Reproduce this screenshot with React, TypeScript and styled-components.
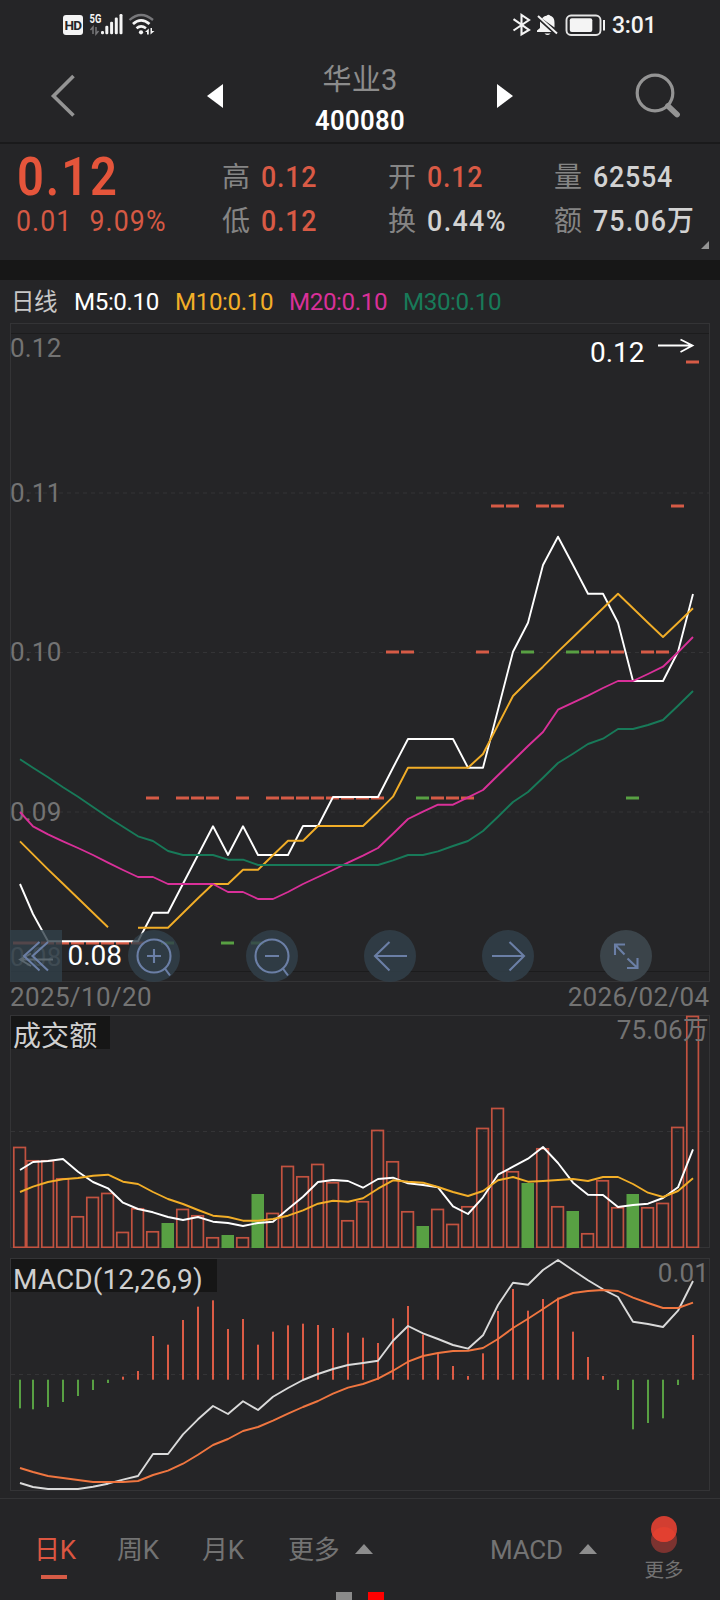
import React from "react";
import styled, { createGlobalStyle } from "styled-components";

const C = {
  bg: "#252527",
  band: "#171717",
  candle: "#d65b46",
  green: "#58a043",
  white: "#ffffff",
  yellow: "#f2ae28",
  pink: "#d93099",
  teal: "#187a59",
  orange: "#f07640",
  grey: "#737373",
  frame: "#343436",
  icon: "#6b7fa6",
};

const GlobalStyle = createGlobalStyle`
  * { box-sizing: border-box; }
  body { margin: 0; background: ${C.bg}; }
`;

const Screen = styled.main`
  width: 720px;
  height: 1600px;
  overflow: hidden;
  display: flex;
  flex-direction: column;
  background: ${C.bg};
  color: #dcdcdc;
  font-family: Roboto, "Noto Sans CJK SC", sans-serif;
`;

const StatusBar = styled.div`
  height: 50px;
  display: flex;
  justify-content: space-between;
  padding: 0 65px 0 63px;
`;

const StatusGroup = styled.div`
  display: flex;
  align-items: center;
  height: 50px;
`;

const HdBadge = styled.span`
  width: 20px;
  height: 20px;
  border-radius: 3px;
  background: #f4f4f4;
  color: ${C.bg};
  font: 700 13.5px/20px Roboto, sans-serif;
  letter-spacing: -0.6px;
  text-align: center;
`;

const Clock = styled.span`
  margin-left: 7px;
  width: 43px;
  font-size: 23px;
  line-height: 51px;
  font-weight: 500;
  letter-spacing: -0.2px;
  color: #f4f4f4;
  white-space: nowrap;
`;

const Header = styled.header`
  height: 94px;
  border-bottom: 2px solid #1a1a1b;
  display: grid;
  grid-template-columns: 207px 306px 207px;
  align-items: start;
`;

const HeaderSide = styled.div<{ $right?: boolean }>`
  height: 92px;
  display: flex;
  justify-content: ${(p) => (p.$right ? "flex-end" : "flex-start")};
  padding: ${(p) => (p.$right ? "23px 39px 0 0" : "24px 0 0 50px")};
`;

const Switcher = styled.div`
  height: 92px;
  display: flex;
  justify-content: space-between;
`;

const Arrow = styled.svg`
  width: 16px;
  height: 24px;
  margin-top: 34px;
`;

const Title = styled.div`
  display: flex;
  flex-direction: column;
  align-items: center;
  padding-top: 9px;
`;

const StockName = styled.div`
  font-size: 29px;
  line-height: 42px;
  letter-spacing: 0.3px;
  color: #8c8c8c;
`;

const StockCode = styled.div`
  font-size: 28.5px;
  line-height: 40px;
  font-weight: 600;
  color: #fff;
  letter-spacing: 0.4px;
  transform: scaleX(0.9);
`;

const Quote = styled.section`
  height: 116px;
  display: grid;
  grid-template-columns: 222px 166px 166px 1fr;
  position: relative;
`;

const LastPrice = styled.div`
  padding-left: 17px;
`;

const Price = styled.div`
  font-size: 54.5px;
  line-height: 46px;
  height: 55px;
  padding-top: 9px;
  font-weight: 600;
  color: #e5553b;
  letter-spacing: 2.2px;
  transform: scaleX(0.865);
  transform-origin: left;
`;

const Change = styled.div`
  display: flex;
  gap: 18.5px;
  margin-left: -1px;
  font-size: 29px;
  line-height: 44px;
  font-weight: 430;
  letter-spacing: 1.2px;
  color: #d65944;
  transform: scaleX(0.92);
  transform-origin: left;
`;

const StatColumn = styled.div`
  padding-top: 11px;
`;

const Stat = styled.div`
  display: flex;
  height: 44px;
  line-height: 44px;
  white-space: nowrap;
`;

const StatLabel = styled.span`
  width: 38.5px;
  padding-top: 1px;
  font-size: 28px;
  color: #858585;
`;

const StatValue = styled.span<{ $up?: boolean; $spacing?: number }>`
  font-size: 29px;
  font-weight: 500;
  letter-spacing: ${(p) => p.$spacing ?? 0.8}px;
  color: ${(p) => (p.$up ? "#d95a45" : "#d2d2d2")};
  transform: scaleX(0.925);
  transform-origin: left;
`;

const Corner = styled.svg`
  position: absolute;
  right: 11px;
  bottom: 11px;
`;

const Band = styled.div`
  height: 20px;
  background: ${C.band};
`;

const Legend = styled.div`
  height: 43px;
  padding-left: 11px;
  display: flex;
  line-height: 44px;
  font-size: 24.2px;
  letter-spacing: -0.4px;
  white-space: nowrap;
`;

const LegendItem = styled.span<{ $color: string; $width: number; $small?: boolean }>`
  width: ${(p) => p.$width}px;
  color: ${(p) => p.$color};
  font-size: ${(p) => (p.$small ? "23.5px" : "inherit")};
`;

const Panel = styled.section<{ $height: number }>`
  height: ${(p) => p.$height}px;
  position: relative;
  flex: none;
`;

const Plot = styled.svg`
  display: block;
`;

const Dates = styled.div`
  height: 33px;
  padding: 0 10.5px 0 10px;
  display: flex;
  justify-content: space-between;
  font-size: 26px;
  line-height: 30px;
  letter-spacing: 0.35px;
  color: ${C.grey};
`;

const PanelName = styled.div<{ $width: number }>`
  position: absolute;
  left: 11px;
  top: 1px;
  width: ${(p) => p.$width}px;
  height: 33px;
  padding-left: 2px;
  background: #161616;
  color: #cfcfcf;
  font-size: 28px;
  line-height: 41px;
  letter-spacing: 0.1px;
  white-space: nowrap;
`;

const PanelMax = styled.div`
  position: absolute;
  right: 11px;
  top: 0;
  font-size: 26px;
  line-height: 31px;
  letter-spacing: 0.15px;
  color: ${C.grey};
`;

const Controls = styled.div`
  position: absolute;
  left: 10px;
  bottom: 0;
  display: flex;
  gap: 66px;
`;

const Control = styled.button<{ $square?: boolean; $bright?: boolean }>`
  width: 52px;
  height: 52px;
  padding: 0;
  border: 0;
  border-radius: ${(p) => (p.$square ? "0" : "50%")};
  background: ${(p) => (p.$bright ? "#3b444a" : p.$square ? "rgba(50, 65, 75, 0.8)" : "rgba(50, 65, 75, 0.82)")};
  svg {
    display: block;
  }
`;

const Gap = styled.div<{ $height: number }>`
  height: ${(p) => p.$height}px;
`;

const TabBar = styled.nav`
  height: 102px;
  border-top: 1px solid ${C.frame};
  display: flex;
  position: relative;
  padding-left: 34px;
  font-size: 26px;
  color: ${C.grey};
`;

const Tab = styled.div<{ $active?: boolean; $width: number; $indent?: number }>`
  width: ${(p) => p.$width}px;
  padding: 31px 0 0 ${(p) => p.$indent ?? 0}px;
  line-height: 40px;
  letter-spacing: -0.2px;
  color: ${(p) => (p.$active ? "#dc5641" : C.grey)};
  white-space: nowrap;
  &::after {
    content: "";
    display: ${(p) => (p.$active ? "block" : "none")};
    width: 26px;
    height: 4px;
    margin: 5px 0 0 7px;
    background: #d65b46;
  }
`;

const Caret = styled.svg`
  margin-top: 45px;
  flex: none;
`;

const More = styled.div`
  width: 40px;
  margin-left: 47px;
  padding-top: 17px;
  text-align: center;
  font-size: 19.5px;
  line-height: 28px;
  white-space: nowrap;
  svg {
    display: block;
    margin: 0 auto 4px;
  }
`;

const Pager = styled.div`
  position: absolute;
  left: 336px;
  bottom: 0;
  display: flex;
  gap: 16px;
`;

const Dot = styled.i<{ $on?: boolean }>`
  width: 16px;
  height: 8px;
  background: ${(p) => (p.$on ? "#ff0000" : "#8a8a8a")};
`;

/* Chart series: vertical positions in thirds of a pixel, one entry per trading day. */

const xAt = (i: number) => (i === 0 ? 20 : 33 + 15 * (i - 1));

const line = (ys: number[], base: number, start = 0) =>
  ys.map((y, k) => `${xAt(start + k)},${(base + y / 3).toFixed(1)}`).join(" ");

const CANDLES: { y: number; up: number[]; down: number[] }[] = [
  { y: 39, up: [45], down: [] },
  { y: 183, up: [32, 33, 35, 36, 44], down: [] },
  { y: 329, up: [25, 26, 31, 38, 39, 40, 42, 43], down: [34, 37] },
  { y: 475, up: [9, 11, 12, 13, 15, 17, 18, 19, 20, 21, 22, 23, 24, 28, 29, 30], down: [27, 41] },
  { y: 620, up: [0, 1, 2, 3, 4, 5, 6, 7, 8], down: [10, 14, 16] },
];

const MA5 = [
  1683, 1773, 1855, 1855, 1855, 1855, 1855, 1855, 1855, 1769, 1769, 1682, 1596, 1510, 1596, 1510, 1596, 1596, 1596,
  1509, 1509, 1422, 1422, 1422, 1422, 1334, 1248, 1248, 1248, 1248, 1334, 1334, 1160, 986, 899, 726, 641, 726, 812,
  812, 899, 1074, 1074, 1074, 986, 813,
];
const MA10_A = [1555, 1594, 1639, 1682, 1726, 1769, 1813];
const MA10_B = [
  1814, 1814, 1814, 1770, 1726, 1683, 1683, 1640, 1640, 1597, 1553, 1553, 1509, 1509, 1509, 1509, 1466, 1421, 1334,
  1334, 1334, 1334, 1334, 1293, 1206, 1119, 1074, 1031, 986, 943, 899, 856, 812, 856, 899, 942, 899, 856,
];
const MA20 = [
  1467, 1510, 1534, 1555, 1575, 1596, 1619, 1641, 1662, 1662, 1683, 1683, 1683, 1683, 1707, 1707, 1728, 1728, 1707,
  1683, 1662, 1641, 1619, 1598, 1575, 1532, 1488, 1466, 1445, 1445, 1423, 1401, 1357, 1313, 1269, 1227, 1160, 1139,
  1118, 1095, 1074, 1074, 1053, 1031, 988, 942,
];
const MA30 = [
  1309, 1334, 1363, 1393, 1421, 1452, 1483, 1511, 1540, 1554, 1584, 1596, 1596, 1596, 1610, 1610, 1626, 1626, 1626,
  1626, 1626, 1626, 1626, 1626, 1626, 1612, 1596, 1596, 1585, 1569, 1554, 1524, 1481, 1437, 1407, 1364, 1320, 1292,
  1263, 1247, 1218, 1218, 1206, 1191, 1148, 1104,
];

const VOLUME = [
  440, 480, 480, 534, 648, 590, 578, 695, 624, 693, 669, 626, 645, 711, 705, 711, 582, 638, 497, 528, 491, 546, 660,
  603, 389, 483, 633, 678, 626, 671, 618, 383, 323, 513, 549, 444, 618, 633, 699, 540, 621, 582, 621, 608, 380, 47,
];
const VOLUME_DOWN = [10, 14, 16, 27, 34, 37, 41];
const VOL_MA5 = [
  510, 486, 483, 477, 515, 546, 565, 608, 627, 637, 651, 660, 651, 665, 669, 678, 669, 665, 627, 590, 546, 540, 543,
  563, 537, 533, 550, 555, 562, 619, 642, 592, 524, 500, 476, 441, 489, 548, 584, 585, 621, 615, 611, 594, 562, 448,
];
const VOL_MA10 = [
  576, 560, 546, 538, 534, 527, 524, 545, 552, 576, 597, 612, 630, 647, 651, 662, 662, 657, 647, 631, 611, 602, 605,
  595, 566, 541, 545, 548, 561, 576, 588, 573, 541, 531, 545, 543, 540, 537, 543, 531, 531, 552, 578, 591, 573, 535,
];

const MACD = [
  505, 508, 501, 486, 468, 450, 429, 410, 393, 288, 314, 240, 200, 181, 267, 237, 314, 275, 256, 251, 255, 264, 278,
  293, 309, 235, 198, 284, 340, 378, 408, 340, 213, 147, 212, 177, 173, 275, 351, 408, 450, 568, 549, 535, 435, 285,
];
const DIF = [
  729, 741, 747, 747, 747, 740, 731, 719, 708, 642, 642, 583, 538, 498, 522, 484, 510, 470, 444, 420, 402, 387, 375,
  369, 362, 302, 258, 280, 297, 315, 326, 286, 195, 128, 134, 90, 60, 91, 121, 148, 171, 245, 252, 261, 212, 123,
];
const DEA = [
  684, 696, 708, 714, 720, 726, 726, 726, 723, 705, 692, 671, 644, 615, 597, 573, 561, 542, 521, 501, 483, 461, 443,
  432, 416, 392, 365, 348, 339, 333, 332, 324, 297, 264, 236, 207, 177, 159, 153, 150, 153, 173, 189, 204, 204, 188,
];

const Curve = ({ points, color }: { points: string; color: string }) => (
  <polyline points={points} fill="none" stroke={color} strokeWidth={1.9} strokeLinejoin="round" />
);

const Frame = ({ height }: { height: number }) => (
  <rect x={10.5} y={0.5} width={699} height={height - 1} fill="none" stroke={C.frame} />
);

const Grid = ({ y }: { y: number }) => (
  <line x1={11} x2={709} y1={y} y2={y} stroke={C.frame} strokeDasharray="4 4" />
);

const PriceChart = () => (
  <Plot width={720} height={659} fontSize={26} fill={C.grey} letterSpacing={0.2}>
    <Frame height={659} />
    <path d="M11 10.5H709M11 648.5H709" stroke="#1c1c1d" />
    {[170, 329.5, 489].map((y) => (
      <Grid key={y} y={y} />
    ))}
    <text x={10} y={34}>0.12</text>
    <text x={10} y={179}>0.11</text>
    <text x={10} y={338}>0.10</text>
    <text x={10} y={498}>0.09</text>
    <text x={10} y={643}>0.08</text>
    {CANDLES.map(({ y, up, down }) => (
      <g key={y}>
        {up.map((i) => (
          <rect key={i} x={xAt(i) - 7} y={y - 1.5} width={13} height={3} fill={C.candle} />
        ))}
        {down.map((i) => (
          <rect key={i} x={xAt(i) - 7} y={y - 1.5} width={13} height={3} fill={C.green} />
        ))}
      </g>
    ))}
    <Curve points={line(MA5, 0)} color={C.white} />
    <Curve points={line(MA10_A, 0)} color={C.yellow} />
    <Curve points={line(MA10_B, 0, 8)} color={C.yellow} />
    <Curve points={line(MA20, 0)} color={C.pink} />
    <Curve points={line(MA30, 0)} color={C.teal} />
    <text x={590} y={39} fontSize={28} letterSpacing={0} fill="#fff">0.12</text>
    <text x={67.5} y={642} fontSize={28} letterSpacing={0} fill="#fff">0.08</text>
    <path
      d="M658 22.5H692M680.5 16.5L692.5 22.5L680.5 29M53 636.5H20M31 630.5L20 636.5L31 643"
      fill="none"
      stroke="#fff"
      strokeWidth={1.8}
    />
  </Plot>
);

const VolumeChart = () => (
  <Plot width={720} height={233}>
    <Frame height={233} />
    <Grid y={116.5} />
    {VOLUME.map((v, i) => {
      const top = v / 3 - 15;
      return VOLUME_DOWN.includes(i) ? (
        <rect key={i} x={xAt(i) - 6.5} y={top} width={12.5} height={233 - top} fill={C.green} />
      ) : (
        <rect
          key={i}
          x={xAt(i) - 6.2}
          y={top + 0.8}
          width={11.6}
          height={231.5 - top}
          fill="none"
          stroke="#c25240"
          strokeWidth={1.7}
        />
      );
    })}
    <Curve points={line(VOL_MA5, -15)} color={C.white} />
    <Curve points={line(VOL_MA10, -15)} color={C.yellow} />
  </Plot>
);

const MacdChart = () => (
  <Plot width={720} height={233}>
    <Frame height={233} />
    <Grid y={116.5} />
    {MACD.map((v, i) => {
      const y = v / 3 - 18;
      const zero = 121.7;
      return (
        <rect
          key={i}
          x={xAt(i) - 1}
          y={Math.min(y, zero)}
          width={2}
          height={Math.abs(y - zero)}
          fill={y > zero ? C.green : "#dc5b45"}
        />
      );
    })}
    <Curve points={line(DIF, -18)} color="#dadada" />
    <Curve points={line(DEA, -18)} color={C.orange} />
  </Plot>
);

const ControlIcon = ({ d, children }: { d: string; children?: React.ReactNode }) => (
  <svg width={52} height={52} fill="none" stroke={C.icon} strokeWidth={2.1}>
    <path d={d} />
    {children}
  </svg>
);

const UpCaret = () => (
  <Caret width={18} height={10} fill="#8d8d8d">
    <path d="M0 10L9 0L18 10Z" />
  </Caret>
);

const SignalIcon = () => (
  <svg width={42} height={24} fill="#f4f4f4">
    <text x={6.5} y={9.7} fontSize={12.2} fontWeight={700} textLength={11.8} lengthAdjust="spacingAndGlyphs">
      5G
    </text>
    <path d="M7.5 17L10 14V21M13 14V21L15.5 18" fill="none" stroke="#77777a" strokeWidth={1.5} />
    <rect x={18} y={18} width={3} height={3.3} rx={1.2} />
    <rect x={22.3} y={12.7} width={3} height={8.6} rx={1.2} />
    <rect x={27.1} y={8.7} width={3} height={12.6} rx={1.2} />
    <rect x={31.8} y={4.5} width={3} height={16.8} rx={1.2} />
    <rect x={36.5} y={1} width={3} height={20.3} rx={1.2} />
  </svg>
);

const WifiIcon = () => (
  <svg width={31} height={24} fill="none">
    <path d="M4.5 7Q16 -3 28 7" stroke="#77777a" strokeWidth={2.3} />
    <path d="M8 11Q16 3.8 24.5 11" stroke="#f4f4f4" strokeWidth={2.8} />
    <path d="M11.5 15.2Q16 11.5 21 15.2" stroke="#f4f4f4" strokeWidth={2.6} />
    <circle cx={16} cy={19.3} r={2.1} fill="#f4f4f4" />
    <path d="M20 19L23.8 15.5V21.500H22V19ZM25.500 15V21.500L29.500 18H27V15Z" fill="#f4f4f4" />
  </svg>
);

const BluetoothIcon = () => (
  <svg width={20} height={24} fill="none" stroke="#f4f4f4" strokeWidth={2.1}>
    <path d="M1.5 6.2L17 17L9.5 21.5V2L17 7L1.5 17.5" />
  </svg>
);

const MutedBellIcon = () => (
  <svg width={28} height={24} fill="#f4f4f4">
    <path d="M10 5.5C11 3.8 13 3 14.5 2.7Q16.5 1 18.3 2.7C22 4 22.5 7 22.5 10V14.5Z" />
    <path d="M8 8.5L19.5 19H5V17.5L8 15Z" />
    <path d="M6 3L25 20.5" stroke="#f4f4f4" strokeWidth={2} />
    <path d="M12.5 20.5H18.5Q15.5 23.5 12.5 20.5Z" />
  </svg>
);

const BatteryIcon = () => (
  <svg width={45} height={24} fill="none">
    <rect x={6.5} y={2.5} width={34} height={19.5} rx={4.5} stroke="#e4e4e4" strokeWidth={1.9} />
    <rect x={9.8} y={5.3} width={22.5} height={13.7} rx={2} fill="#f4f4f4" />
    <path d="M44 7V17.5" stroke="#f4f4f4" strokeWidth={2} />
  </svg>
);

export default function App() {
  return (
    <Screen>
      <GlobalStyle />
      <StatusBar>
        <StatusGroup>
          <HdBadge>HD</HdBadge>
          <SignalIcon />
          <WifiIcon />
        </StatusGroup>
        <StatusGroup>
          <BluetoothIcon />
          <MutedBellIcon />
          <BatteryIcon />
          <Clock>3:01</Clock>
        </StatusGroup>
      </StatusBar>

      <Header>
        <HeaderSide>
          <svg width={26} height={44} fill="none" stroke="#949494" strokeWidth={3.6}>
            <path d="M23.5 2L3.5 22L23.5 41.5" />
          </svg>
        </HeaderSide>
        <Switcher>
          <Arrow fill="#fff">
            <path d="M0 12L16 0V24Z" />
          </Arrow>
          <Title>
            <StockName>华业3</StockName>
            <StockCode>400080</StockCode>
          </Title>
          <Arrow fill="#fff">
            <path d="M16 12L0 0V24Z" />
          </Arrow>
        </Switcher>
        <HeaderSide $right>
          <svg width={46} height={48} fill="none" stroke="#949494">
            <circle cx={20} cy={20} r={17.8} strokeWidth={3.2} />
            <path d="M33 33L42 41.5" strokeWidth={5.8} strokeLinecap="round" />
          </svg>
        </HeaderSide>
      </Header>

      <Quote>
        <LastPrice>
          <Price>0.12</Price>
          <Change>
            <span>0.01</span>
            <span>9.09%</span>
          </Change>
        </LastPrice>
        <StatColumn>
          <Stat>
            <StatLabel>高</StatLabel>
            <StatValue $up>0.12</StatValue>
          </Stat>
          <Stat>
            <StatLabel>低</StatLabel>
            <StatValue $up>0.12</StatValue>
          </Stat>
        </StatColumn>
        <StatColumn>
          <Stat>
            <StatLabel>开</StatLabel>
            <StatValue $up>0.12</StatValue>
          </Stat>
          <Stat>
            <StatLabel>换</StatLabel>
            <StatValue $spacing={1.5}>0.44%</StatValue>
          </Stat>
        </StatColumn>
        <StatColumn>
          <Stat>
            <StatLabel>量</StatLabel>
            <StatValue>62554</StatValue>
          </Stat>
          <Stat>
            <StatLabel>额</StatLabel>
            <StatValue $spacing={1.2}>75.06万</StatValue>
          </Stat>
        </StatColumn>
        <Corner width={8} height={8} fill="#949494">
          <path d="M8 0V8H0Z" />
        </Corner>
      </Quote>

      <Band />

      <Legend>
        <LegendItem $width={63} $color="#c8c8c8" $small>日线</LegendItem>
        <LegendItem $width={101} $color="#ffffff">M5:0.10</LegendItem>
        <LegendItem $width={114} $color={C.yellow}>M10:0.10</LegendItem>
        <LegendItem $width={114} $color={C.pink}>M20:0.10</LegendItem>
        <LegendItem $width={100} $color={C.teal}>M30:0.10</LegendItem>
      </Legend>

      <Panel $height={659}>
        <PriceChart />
        <Controls>
          <Control $square aria-label="back">
            <ControlIcon d="M29.5 12L14 26L29.5 40.5M38 12L22.5 26L38 40.5" />
          </Control>
          <Control aria-label="zoom in">
            <ControlIcon d="M26 19V33M19 26H33M36.5 38L42 45.5">
              <circle cx={26} cy={26} r={16.5} />
            </ControlIcon>
          </Control>
          <Control aria-label="zoom out">
            <ControlIcon d="M19 26H33M36.5 38L42 45.5">
              <circle cx={26} cy={26} r={16.5} />
            </ControlIcon>
          </Control>
          <Control aria-label="left">
            <ControlIcon d="M43 26H11M25.5 12L11 26L25.5 40.5" />
          </Control>
          <Control aria-label="right">
            <ControlIcon d="M10 26H42M27.5 12L42 26L27.5 40.5" />
          </Control>
          <Control $bright aria-label="expand">
            <ControlIcon d="M25 14.5H15V25M15 14.5L24.5 24.5M27.5 28.5L37.5 38M37.5 28V38H27" />
          </Control>
        </Controls>
      </Panel>

      <Dates>
        <span>2025/10/20</span>
        <span>2026/02/04</span>
      </Dates>

      <Panel $height={233}>
        <VolumeChart />
        <PanelName $width={99}>成交额</PanelName>
        <PanelMax>75.06万</PanelMax>
      </Panel>
      <Gap $height={10} />
      <Panel $height={233}>
        <MacdChart />
        <PanelName $width={206}>MACD(12,26,9)</PanelName>
        <PanelMax>0.01</PanelMax>
      </Panel>
      <Gap $height={7} />

      <TabBar>
        <Tab $active $width={83}>日K</Tab>
        <Tab $width={85}>周K</Tab>
        <Tab $width={86}>月K</Tab>
        <Tab $width={67}>更多</Tab>
        <UpCaret />
        <Tab $width={206} $indent={117}>MACD</Tab>
        <UpCaret />
        <More>
          <svg width={26} height={37}>
            <circle cx={13} cy={24} r={13} fill="#7c3330" />
            <circle cx={13} cy={13} r={13} fill="#d23e31" />
            <path d="M1.2 18.5A13 13 0 0 1 24.8 18.5A13 13 0 0 1 1.2 18.5Z" fill="#e24030" />
          </svg>
          更多
        </More>
        <Pager>
          <Dot />
          <Dot $on />
        </Pager>
      </TabBar>
    </Screen>
  );
}
